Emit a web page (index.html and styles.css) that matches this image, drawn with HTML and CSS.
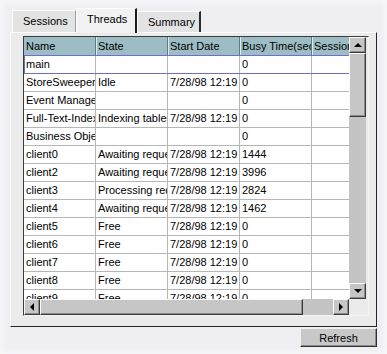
FILE: index.html
```html
<!DOCTYPE html>
<html lang="en">
	<head>
		<meta charset="UTF-8" />
		<meta name="viewport" content="width=device-width, initial-scale=1.0" />
		<title>Threads</title>
		<link rel="stylesheet" href="styles.css">
	</head>
	<body>
		<div class="window">
			<div class="tabs">
				<div class="tab">Sessions</div>
				<div class="tab active">Threads</div>
				<div class="tab">Summary</div>
			</div>

			<div class="panel">
				<div class="table">
					<div class="view">
						<div class="row head">
							<div class="cell">Name</div>
							<div class="cell">State</div>
							<div class="cell">Start Date</div>
							<div class="cell">Busy Time(sec)</div>
							<div class="cell">Sessions</div>
						</div>
						<div class="row focus">
							<div class="cell">main</div>
							<div class="cell"></div>
							<div class="cell"></div>
							<div class="cell">0</div>
							<div class="cell"></div>
						</div>
						<div class="row">
							<div class="cell">StoreSweeper</div>
							<div class="cell">Idle</div>
							<div class="cell">7/28/98 12:19</div>
							<div class="cell">0</div>
							<div class="cell"></div>
						</div>
						<div class="row">
							<div class="cell">Event Manager</div>
							<div class="cell"></div>
							<div class="cell"></div>
							<div class="cell">0</div>
							<div class="cell"></div>
						</div>
						<div class="row">
							<div class="cell">Full-Text-Indexer</div>
							<div class="cell">Indexing tables</div>
							<div class="cell">7/28/98 12:19</div>
							<div class="cell">0</div>
							<div class="cell"></div>
						</div>
						<div class="row">
							<div class="cell">Business Objects</div>
							<div class="cell"></div>
							<div class="cell"></div>
							<div class="cell">0</div>
							<div class="cell"></div>
						</div>
						<div class="row">
							<div class="cell">client0</div>
							<div class="cell">Awaiting request</div>
							<div class="cell">7/28/98 12:19</div>
							<div class="cell">1444</div>
							<div class="cell"></div>
						</div>
						<div class="row">
							<div class="cell">client2</div>
							<div class="cell">Awaiting request</div>
							<div class="cell">7/28/98 12:19</div>
							<div class="cell">3996</div>
							<div class="cell"></div>
						</div>
						<div class="row">
							<div class="cell">client3</div>
							<div class="cell">Processing request</div>
							<div class="cell">7/28/98 12:19</div>
							<div class="cell">2824</div>
							<div class="cell"></div>
						</div>
						<div class="row">
							<div class="cell">client4</div>
							<div class="cell">Awaiting request</div>
							<div class="cell">7/28/98 12:19</div>
							<div class="cell">1462</div>
							<div class="cell"></div>
						</div>
						<div class="row">
							<div class="cell">client5</div>
							<div class="cell">Free</div>
							<div class="cell">7/28/98 12:19</div>
							<div class="cell">0</div>
							<div class="cell"></div>
						</div>
						<div class="row">
							<div class="cell">client6</div>
							<div class="cell">Free</div>
							<div class="cell">7/28/98 12:19</div>
							<div class="cell">0</div>
							<div class="cell"></div>
						</div>
						<div class="row">
							<div class="cell">client7</div>
							<div class="cell">Free</div>
							<div class="cell">7/28/98 12:19</div>
							<div class="cell">0</div>
							<div class="cell"></div>
						</div>
						<div class="row">
							<div class="cell">client8</div>
							<div class="cell">Free</div>
							<div class="cell">7/28/98 12:19</div>
							<div class="cell">0</div>
							<div class="cell"></div>
						</div>
						<div class="row">
							<div class="cell">client9</div>
							<div class="cell">Free</div>
							<div class="cell">7/28/98 12:19</div>
							<div class="cell">0</div>
							<div class="cell"></div>
						</div>
					</div>

					<div class="vscroll">
						<div class="sbtn"><span class="arrow up"></span></div>
						<div class="thumb vthumb"></div>
						<div class="track"></div>
						<div class="sbtn"><span class="arrow down"></span></div>
					</div>

					<div class="hscroll">
						<div class="sbtn"><span class="arrow left"></span></div>
						<div class="thumb hthumb"></div>
						<div class="track"></div>
						<div class="sbtn"><span class="arrow right"></span></div>
					</div>

					<div class="corner"></div>
				</div>
			</div>

			<div class="actions">
				<button class="btn">Refresh</button>
			</div>
		</div>
	</body>
</html>
```

FILE: styles.css
```css
body {
	margin: 0;
	background: #efeef2;
	font-family: "Liberation Sans", Arial, sans-serif;
	font-size: 11px;
	color: #000;
}
.window {
	width: 387px;
	height: 354px;
	padding-top: 8px;
	box-sizing: border-box;
	box-shadow: inset 0 0 6px 2px #f8f8fb;
}

/* tabs */
.tabs {
	display: flex;
	align-items: flex-end;
	padding-left: 12px;
	height: 24px;
}
.tab {
	height: 22px;
	padding: 0 10px;
	box-sizing: border-box;
	line-height: 21px;
	background: #e3e3e3;
	border-top: 1px solid #fdfdfd;
	border-left: 1px solid #fdfdfd;
	border-right: 1px solid #9a9a9a;
}
.tab:first-child {
	width: 64px;
	text-align: center;
}
.tab.active {
	height: 24px;
	width: 61px;
	text-align: center;
	line-height: 20px;
	background: #f2f2f2;
	border-right: 2px solid #1c1c1c;
	position: relative;
	z-index: 1;
	margin-bottom: -1px;
	height: 25px;
}
.tab:last-child {
	width: 64px;
	height: 21px;
	text-align: center;
	line-height: 20px;
	border-right: 2px solid #2a2a2a;
}

/* panel */
.panel {
	margin-left: 10px;
	width: 367px;
	height: 295px;
	box-sizing: border-box;
	padding: 3px 9px 10px 12px;
	background: #ebebeb;
	border-top: 1px solid #fbfbfb;
	border-left: 1px solid #fbfbfb;
	border-right: 1px solid #262626;
	border-bottom: 1px solid #262626;
}

/* table */
.table {
	display: grid;
	grid-template-columns: 325px 17px;
	grid-template-rows: 262px 16px;
	width: 344px;
	border-top: 1px solid #3c3c3c;
	border-left: 1px solid #3c3c3c;
	border-right: 1px solid #f4f4f4;
	border-bottom: 1px solid #f4f4f4;
}
.view {
	background: #fff;
	overflow: hidden;
}
.row {
	display: flex;
	height: 18px;
	box-sizing: border-box;
	border-bottom: 1px solid #b6b6b6;
}
.cell {
	flex: 0 0 72px;
	box-sizing: border-box;
	padding-left: 2px;
	line-height: 17px;
	white-space: nowrap;
	overflow: hidden;
	border-right: 1px solid #b6b6b6;
}
.row.head {
	background: #9dbcc3;
	border-bottom: none;
}
.row.head .cell {
	line-height: 18px;
	border-right: 1px solid #5d7c83;
	box-shadow: inset 1px 0 #d3eef2;
}
.row.head .cell:first-child {
	box-shadow: none;
}
.row.focus {
	height: 19px;
	border-top: 1px solid #6a72c6;
	border-bottom-color: #6a72c6;
	box-shadow: inset 1px 0 #6a72c6;
}

/* scrollbars */
.vscroll {
	display: flex;
	flex-direction: column;
	background: #c4c4c4;
}
.hscroll {
	display: flex;
	background: #c4c4c4;
}
.corner {
	background: #ebebeb;
}
.sbtn {
	flex: 0 0 16px;
	height: 16px;
	box-sizing: border-box;
	display: flex;
	align-items: center;
	justify-content: center;
	background: #c6c6c6;
	border: 1px solid;
	border-color: #fafafa #3a3a3a #3a3a3a #fafafa;
	box-shadow: inset -1px -1px #8c8c8c;
}
.vscroll .sbtn {
	width: 17px;
}
.thumb {
	box-sizing: border-box;
	background: #c6c6c6;
	border: 1px solid;
	border-color: #fafafa #3a3a3a #3a3a3a #fafafa;
	box-shadow: inset -1px -1px #8c8c8c;
}
.vthumb {
	flex: 0 0 64px;
}
.hthumb {
	flex: 0 0 263px;
}
.track {
	flex: 1;
}
.arrow {
	width: 0;
	height: 0;
	border: 4px solid transparent;
}
.arrow.up {
	border-bottom-color: #000;
	border-top-width: 0;
}
.arrow.down {
	border-top-color: #000;
	border-bottom-width: 0;
}
.arrow.left {
	border-right-color: #000;
	border-left-width: 0;
}
.arrow.right {
	border-left-color: #000;
	border-right-width: 0;
}

/* bottom buttons */
.actions {
	display: flex;
	justify-content: flex-end;
	width: 367px;
	margin-left: 10px;
	margin-top: 1px;
}
.btn {
	width: 77px;
	height: 19px;
	padding: 0;
	font-family: inherit;
	font-size: 11px;
	color: #000;
	background: #c8c8c8;
	border: 1px solid;
	border-color: #f0f0f0 #303030 #303030 #f0f0f0;
	box-shadow: inset -1px -1px #8c8c8c;
}
```
